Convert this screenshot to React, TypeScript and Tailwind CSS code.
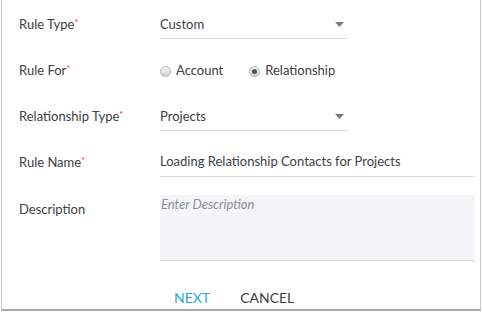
const font = { fontFamily: "Lato, 'Open Sans', sans-serif" };

function Label({ text, required }: { text: string; required?: boolean }) {
  return (
    <div className="w-[142px] shrink-0 text-[13px] text-[#404040]">
      {text}
      {required && <span className="text-[#e53935] text-[9px] align-top relative top-[1px]">*</span>}
    </div>
  );
}

function Caret() {
  return (
    <svg width="9" height="5" viewBox="0 0 9 5" className="shrink-0">
      <path d="M0 0 H9 L4.5 5 Z" fill="#7a7a7a" />
    </svg>
  );
}

function Radio({ checked, label }: { checked?: boolean; label: string }) {
  return (
    <label className="flex items-center gap-[5px]">
      <span className="w-[11px] h-[11px] rounded-full border border-[#b5b5b5] bg-gradient-to-b from-[#f4f4f4] to-[#d2d2d2] flex items-center justify-center">
        {checked && <span className="w-[5px] h-[5px] rounded-full bg-[#555]" />}
      </span>
      <span className="text-[13px] text-[#404040]">{label}</span>
    </label>
  );
}

export default function App() {
  return (
    <div className="w-[482px] h-[314px] bg-white" style={font}>
      <div className="ml-[1px] w-[480px] h-[311px] border-x border-[#c8c8c8] border-b-2 border-b-[#a9a9a9] flex flex-col pl-[17px]">
        <div className="flex items-center h-[28px] mt-[11px]">
          <Label text="Rule Type" required />
          <div className="w-[188px] h-full flex items-center justify-between border-b border-[#dcdcdc] pr-[4px] ml-[-1px] text-[13px] text-[#404040]">
            <span>Custom</span>
            <Caret />
          </div>
        </div>

        <div className="flex items-center h-[28px] mt-[18px]">
          <Label text="Rule For" required />
          <div className="flex items-center gap-[26px] ml-[-1px]">
            <Radio label="Account" />
            <Radio label="Relationship" checked />
          </div>
        </div>

        <div className="flex items-center h-[28px] mt-[18px]">
          <Label text="Relationship Type" required />
          <div className="w-[188px] h-full flex items-center justify-between border-b border-[#dcdcdc] pr-[4px] ml-[-1px] text-[13px] text-[#404040]">
            <span>Projects</span>
            <Caret />
          </div>
        </div>

        <div className="flex items-center h-[29px] mt-[17px]">
          <Label text="Rule Name" required />
          <div className="w-[315px] h-full flex items-center border-b border-[#dcdcdc] ml-[-1px] text-[13px] text-[#404040]">
            Loading Relationship Contacts for Projects
          </div>
        </div>

        <div className="flex items-start mt-[18px]">
          <div className="pt-[5px]">
            <Label text="Description" />
          </div>
          <div className="w-[315px] h-[66px] ml-[-1px] bg-[#f4f5f6] border-b border-[#dcdcdc] px-[1px] text-[13px] italic text-[#8a8f96]">
            Enter Description
          </div>
        </div>

        <div className="flex items-center gap-[30px] mt-[26px] ml-[155px] text-[14px]">
          <button className="text-[#29a8df]">NEXT</button>
          <button className="text-[#404040]">CANCEL</button>
        </div>
      </div>
    </div>
  );
}
